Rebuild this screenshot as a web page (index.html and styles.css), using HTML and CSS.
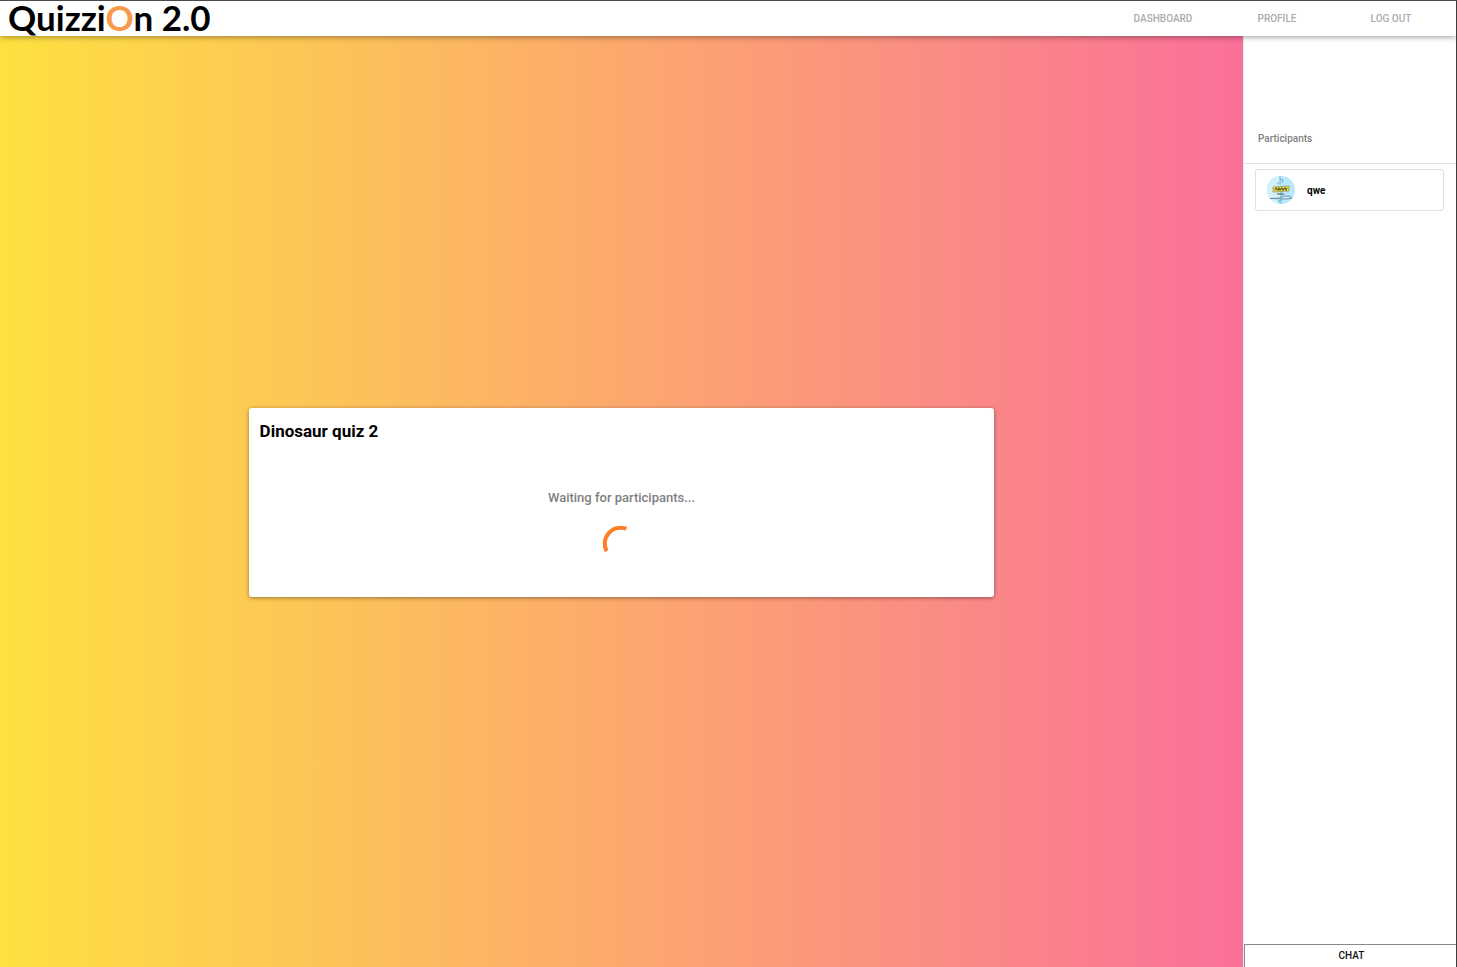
FILE: index.html
```html
<!DOCTYPE html>
<html lang="en">
<head>
<meta charset="utf-8">
<title>QuizziOn 2.0</title>
<link rel="stylesheet" href="styles.css">
</head>
<body>
<header class="topbar">
  <a class="logo" href="#">Quizzi<span class="logo-o">O</span>n 2.0</a>
  <nav class="nav">
    <a href="#">DASHBOARD</a>
    <a href="#">PROFILE</a>
    <a href="#">LOG OUT</a>
  </nav>
</header>
<div class="layout">
  <main class="stage">
    <section class="card">
      <h1 class="card-title">Dinosaur quiz 2</h1>
      <p class="waiting">Waiting for participants...</p>
      <svg class="spinner" viewBox="0 0 36 36" role="img" aria-label="Loading">
        <path d="M3.600 25.200A16 16 0 0 1 23.400 2.700" fill="none" stroke="#ff7f27" stroke-width="4"/>
      </svg>
    </section>
  </main>
  <aside class="sidebar">
    <h2 class="sidebar-title">Participants</h2>
    <ul class="people">
      <li class="person">
        <svg class="avatar" viewBox="0 0 28 28" aria-hidden="true">
          <defs><clipPath id="round"><circle cx="14" cy="14" r="14"/></clipPath></defs>
          <g clip-path="url(#round)">
            <path d="M0 0h28v28H0z" fill="#b9e8ff"/>
            <path d="M0 0h13v28H0z" fill="#d2f0fa"/>
            <path d="M13 0v9M13 3l3 1-1 3M12 7l-2 1M14 16v12M14 24l-3 1 2 2" fill="none" stroke="#6cb3dc"/>
            <path d="M6 11l16-1v5L6 16z" fill="#e9dc4e" stroke="#8f8f50" stroke-width=".7"/>
            <path d="M8 14l1-2 2 2 1-2 1 2 2-2 1 2 2-2 1 2 1-2" fill="none" stroke="#5c602f" stroke-width="1.100"/>
            <path d="M10 18h7" stroke="#80766f" stroke-width="1.500"/>
            <path d="M3 22.500l10-.500 4-2h5l3 2-5 1z" fill="#d3e5ec" stroke="#5f8ea5" stroke-width=".9"/>
          </g>
        </svg>
        <span>qwe</span>
      </li>
    </ul>
    <button class="chat" type="button">CHAT</button>
  </aside>
</div>
</body>
</html>
```

FILE: styles.css
```css
* { box-sizing: border-box; }
body {
  margin: 0;
  min-height: 100vh;
  display: flex;
  flex-direction: column;
  border-top: 1px solid #4b4b4d;
  border-right: 1px solid #3c3c3e;
  font-family: Roboto, sans-serif;
  background: #fff;
}
.topbar {
  display: flex;
  justify-content: space-between;
  align-items: center;
  height: 35px;
  padding: 0 8px;
  background: #fff;
  box-shadow: 0 1px 6px rgba(0, 0, 0, .4);
  z-index: 1;
}
.logo {
  padding-bottom: 4px;
  font: 700 35px/32px Lato, sans-serif;
  color: #000;
  text-decoration: none;
  white-space: nowrap;
}
.logo-o { color: #f79a4b; }
.nav { display: flex; }
.nav a {
  width: 114px;
  text-align: center;
  font-size: 10px;
  line-height: 16px;
  font-weight: 500;
  color: #acacac;
  text-decoration: none;
}
.layout { flex: 1; display: flex; }
.stage {
  flex: 1;
  display: flex;
  align-items: center;
  justify-content: center;
  padding-top: 2px;
  background: linear-gradient(90deg, #fee140 0%, #fa709a 100%);
}
.card {
  width: 60%;
  padding: 12px 11px 43px;
  display: flex;
  flex-direction: column;
  align-items: center;
  background: #fff;
  border-radius: 3px;
  box-shadow: 0 1px 4px rgba(0, 0, 0, .4);
}
.card-title {
  align-self: flex-start;
  margin: 0;
  font-size: 17px;
  line-height: 22px;
  font-weight: 700;
}
.waiting {
  margin: 46px 0 18px;
  font-size: 13px;
  line-height: 20px;
  font-weight: 500;
  color: #808080;
}
.spinner { width: 36px; height: 36px; margin-bottom: -8px; overflow: visible; }
.sidebar {
  width: 213px;
  display: flex;
  flex-direction: column;
  border-left: 1px solid #eee;
}
.sidebar-title {
  margin: 0;
  padding: 95px 14px 16px;
  font-size: 10px;
  line-height: 16px;
  font-weight: 500;
  color: #808080;
  border-bottom: 1px solid #e4e4e4;
}
.people {
  flex: 1;
  margin: 0;
  padding: 5px 12px 5px 11px;
  list-style: none;
}
.person {
  display: flex;
  align-items: center;
  gap: 12px;
  padding: 6px 11px;
  border: 1px solid #e0e0e0;
  border-radius: 3px;
  font-size: 10px;
  font-weight: 700;
}
.avatar { width: 28px; height: 28px; }
.chat {
  height: 23px;
  padding: 0 0 0 2px;
  border: 1px solid #8a8a8a;
  border-width: 1px 0 0 1px;
  background: #fff;
  font: 500 10px/16px Roboto, sans-serif;
  color: #111;
}
```
